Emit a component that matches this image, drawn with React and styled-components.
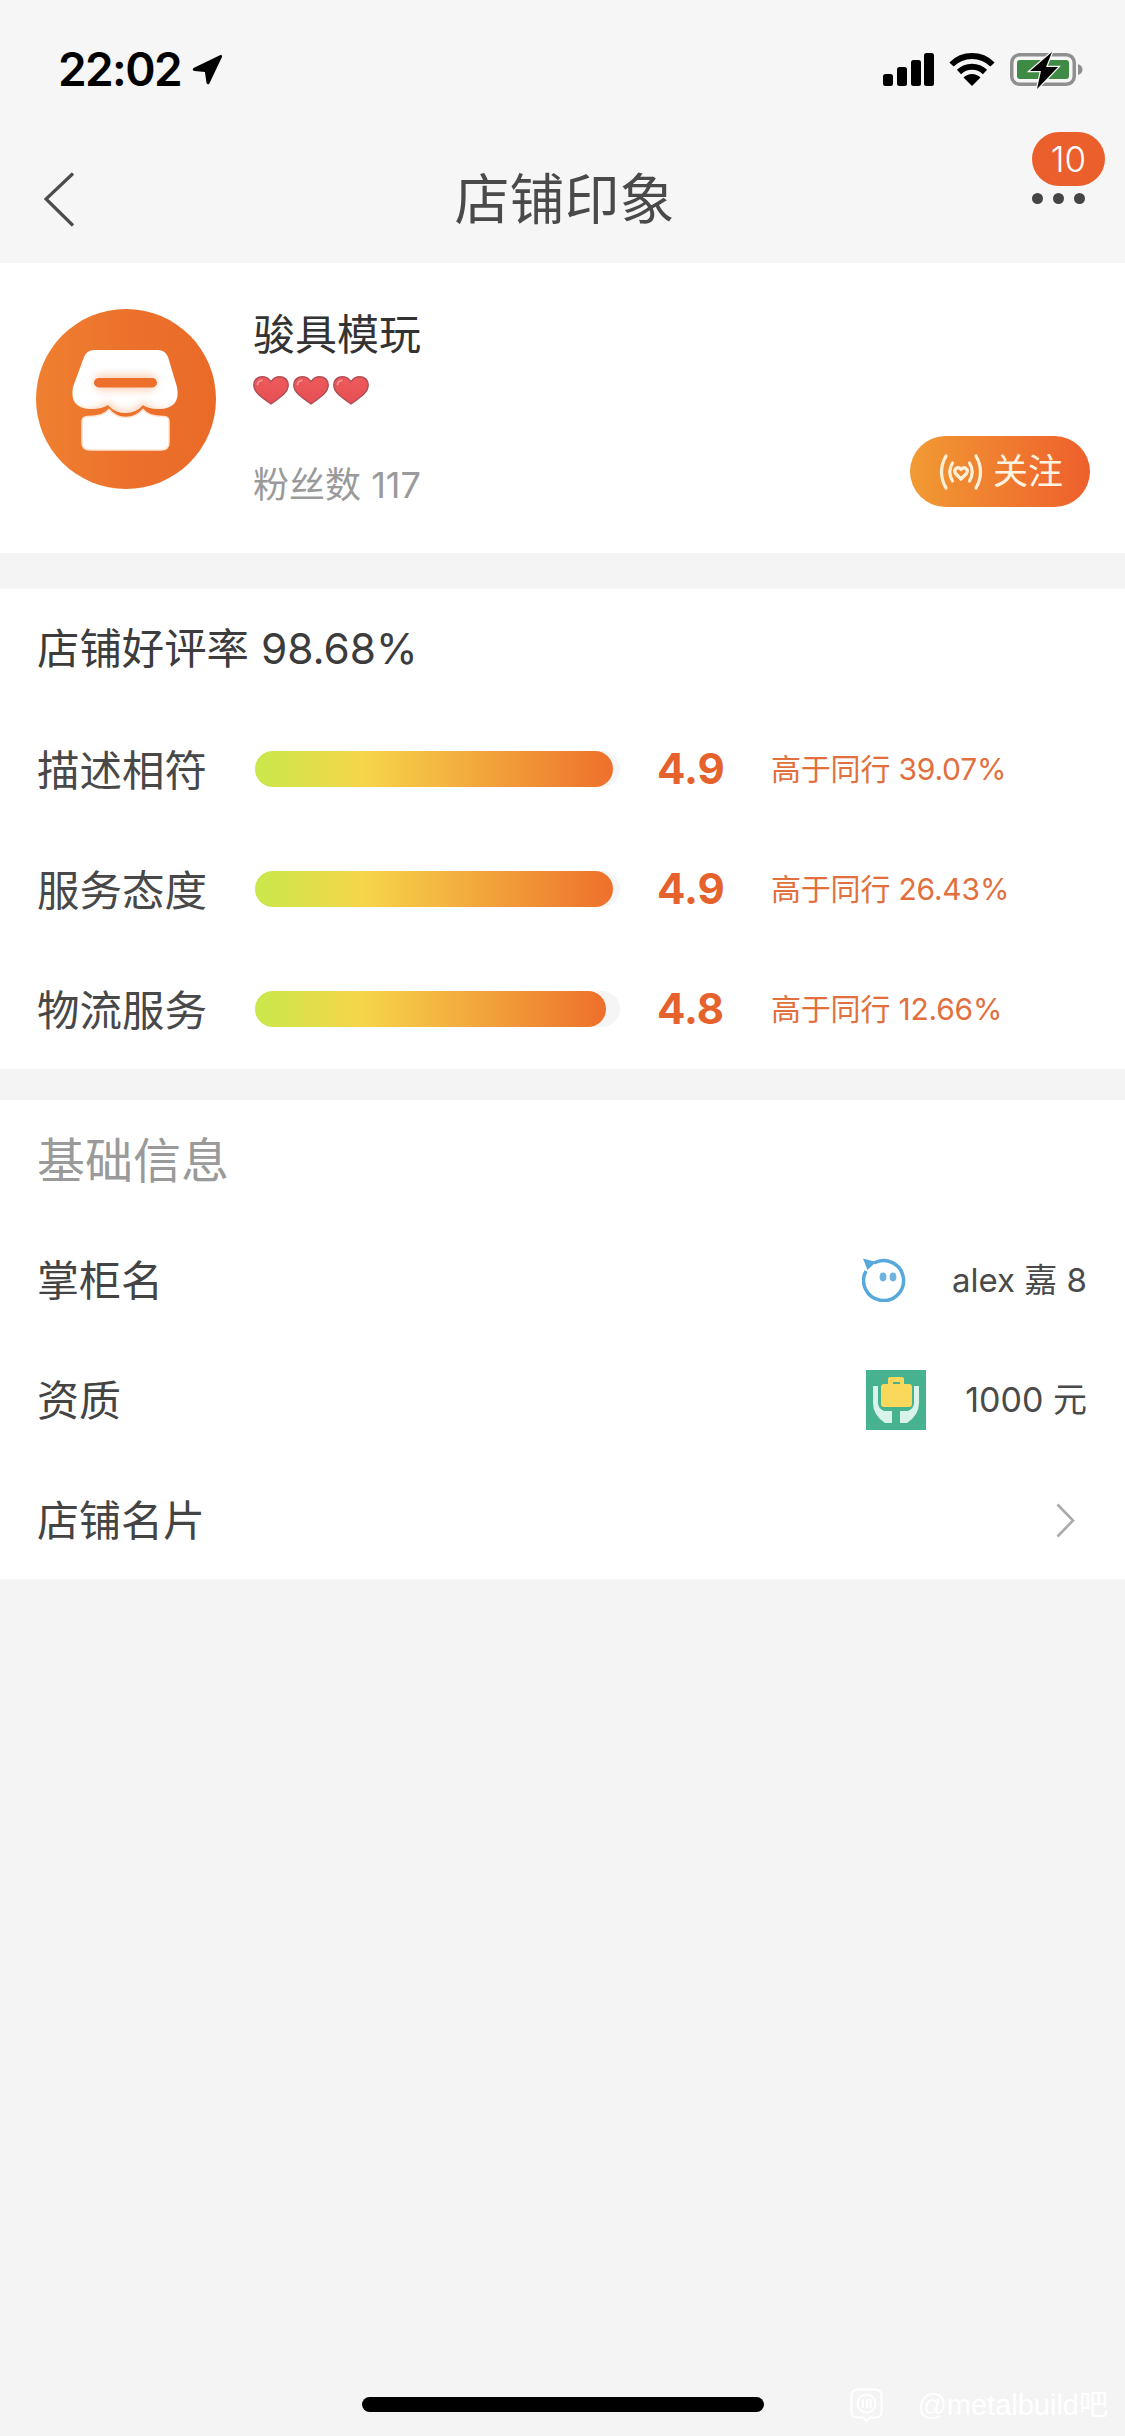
import React from "react";
import styled, { createGlobalStyle } from "styled-components";

const FONT = '"Inter", "Noto Sans CJK SC", sans-serif';

const Global = createGlobalStyle`
  html, body { margin: 0; padding: 0; background: #f4f4f4; }
  body { font-family: ${FONT}; }
  * { box-sizing: border-box; }
`;

const Page = styled.div`
  position: relative;
  width: 1125px;
  height: 2436px;
  overflow: hidden;
  display: flex;
  flex-direction: column;
  background: #f4f4f4;
`;

const Header = styled.header`
  background: #f6f6f6;
  height: 263px;
  display: flex;
  flex-direction: column;
`;

const StatusBar = styled.div`
  height: 138px;
  padding: 52px 42px 0 58px;
  display: flex;
  justify-content: space-between;
  align-items: flex-start;
`;

const Clock = styled.div`
  display: flex;
  align-items: center;
  gap: 11px;
  height: 34px;
`;

const ClockText = styled.span`
  font-weight: 600;
  font-size: 46px;
  line-height: 34px;
  letter-spacing: -1.6px;
  color: #000;
`;

const StatusIcons = styled.div`
  display: flex;
  align-items: center;
  gap: 15px;
  height: 34px;
`;

const NavBar = styled.nav`
  height: 125px;
  display: grid;
  grid-template-columns: 1fr auto 1fr;
  align-items: center;
  padding: 0 40px 0 44px;
  position: relative;
`;

const BackIcon = styled.svg`
  margin-top: -3px;
`;

const NavTitle = styled.h1`
  margin: -3px 0 0;
  font-size: 55px;
  line-height: 70px;
  font-weight: 400;
  color: #4a4a4a;
`;

const Dots = styled.div`
  justify-self: end;
  display: flex;
  gap: 10px;
  margin-top: -4px;
`;

const Dot = styled.span`
  width: 11px;
  height: 11px;
  border-radius: 50%;
  background: #454545;
`;

const Badge = styled.span`
  position: absolute;
  right: 20px;
  top: -6px;
  width: 73px;
  height: 54px;
  border-radius: 27px;
  background: #ea5f2b;
  color: #fff;
  font-size: 35px;
  font-weight: 300;
  line-height: 54px;
  text-align: center;
`;

const ShopCard = styled.section`
  background: #fff;
  height: 290px;
  padding: 46px 35px 46px 36px;
  display: flex;
`;

const AvatarSvg = styled.svg`
  width: 180px;
  height: 180px;
  flex: none;
`;

const ShopInfo = styled.div`
  margin-left: 37px;
  flex: 1;
  display: flex;
  flex-direction: column;
`;

const ShopName = styled.div`
  padding-top: 2px;
  font-size: 42px;
  line-height: 48px;
  color: #333;
`;

const Hearts = styled.div`
  display: flex;
  gap: 4px;
  margin-top: 17px;
`;

const Fans = styled.div`
  margin-top: auto;
  padding-top: 2px;
  font-size: 36px;
  line-height: 44px;
  color: #9a9a9a;
`;

const FollowButton = styled.div`
  align-self: flex-end;
  width: 180px;
  height: 71px;
  border-radius: 36px;
  background: linear-gradient(90deg, #f19a33, #ee5f2c);
  display: flex;
  align-items: center;
  padding-left: 29px;
  gap: 10px;
  color: #fff4e2;
  font-size: 35px;
  line-height: 71px;
`;

const ScoreCard = styled.section`
  background: #fff;
  margin-top: 36px;
  height: 480px;
`;

const ScoreTitle = styled.div`
  height: 120px;
  padding: 36px 0 0 37px;
  font-size: 42.4px;
  line-height: 48px;
  color: #3c3c3c;
`;

const ScoreRow = styled.div`
  height: 120px;
  display: flex;
  align-items: center;
  padding-left: 37px;
`;

const ScoreLabel = styled.div`
  width: 218px;
  flex: none;
  padding-top: 3px;
  font-size: 42.5px;
  line-height: 48px;
  color: #484848;
`;

const Track = styled.div`
  width: 365px;
  height: 36px;
  flex: none;
  border-radius: 18px;
  background: #f5f5f5;
`;

const Fill = styled.div`
  height: 100%;
  border-radius: 18px;
  background: linear-gradient(90deg, #c9e84b 0%, #f6d54a 30%, #f2a83c 62%, #ee6f2b 100%);
`;

const ScoreValue = styled.div`
  width: 114px;
  flex: none;
  margin-left: 37px;
  font-size: 42px;
  font-weight: 700;
  line-height: 48px;
  color: #e5622d;
`;

const ScoreNote = styled.div`
  font-size: 30px;
  line-height: 36px;
  letter-spacing: -0.2px;
  color: #e2703f;
  white-space: nowrap;
`;

const InfoCard = styled.section`
  background: #fff;
  margin-top: 31px;
  height: 479px;
`;

const InfoTitle = styled.div`
  height: 120px;
  padding: 30px 0 0 37px;
  font-size: 48px;
  line-height: 62px;
  color: #9a9a9a;
`;

const InfoRow = styled.div`
  height: 120px;
  display: flex;
  align-items: center;
  justify-content: space-between;
  padding: 0 38px 0 37px;
`;

const InfoLabel = styled.div`
  padding-top: 2px;
  font-size: 42px;
  line-height: 48px;
  color: #444;
`;

const InfoValue = styled.div`
  display: flex;
  align-items: center;
  gap: ${(p) => p.$gap}px;
  font-size: ${(p) => p.$size}px;
  line-height: 42px;
  color: #4a4a4a;
`;

const Footer = styled.footer`
  margin-top: auto;
  padding-bottom: 24px;
  display: flex;
  justify-content: center;
`;

const HomeBar = styled.div`
  width: 402px;
  height: 15px;
  border-radius: 8px;
  background: #000;
`;

const Watermark = styled.div`
  position: absolute;
  right: 17px;
  bottom: 14px;
  display: flex;
  align-items: center;
  gap: 34px;
  font-family: "Liberation Sans", "Noto Sans CJK SC", sans-serif;
  font-size: 29px;
  line-height: 34px;
  color: #fff;
  white-space: nowrap;
`;

const Chevron = styled.svg`
  display: block;
  margin-right: ${(p) => p.$inset || 0}px;
`;

const Heart = () => (
  <svg width="36" height="29" viewBox="0 0 36 29">
    <defs>
      <linearGradient id="heartFill" x1="0" y1="0" x2="0" y2="1">
        <stop offset="0" stopColor="#ee5a5a" />
        <stop offset="1" stopColor="#e64f55" />
      </linearGradient>
    </defs>
    <path
      d="M18 27.8 C11 22.5 0.8 17.5 0.8 8.8 C0.8 3.8 4.8 0.8 9.3 0.8 C13 0.8 16 2.8 18 5.6 C20 2.8 23 0.8 26.7 0.8 C31.2 0.8 35.2 3.8 35.2 8.8 C35.2 17.5 25 22.5 18 27.8 Z"
      fill="url(#heartFill)"
      stroke="#b25058"
      strokeWidth="1.5"
    />
    <path d="M4.5 8.5 C5 6.2 6.8 4.6 9 4.4" fill="none" stroke="#f59a98" strokeWidth="1.6" strokeLinecap="round" />
  </svg>
);

const AWNING =
  "M58 41 H122 Q129 41 132 48 L141 78 Q145 99 124 100 Q112 100 107 96 Q100 104 89.5 104 Q79 104 72 96 Q66 100 54 100 Q33 99 37 78 L48 48 Q51 41 58 41 Z";

const Avatar = () => (
  <AvatarSvg viewBox="0 0 180 180">
    <defs>
      <linearGradient id="avatarBg" x1="0" y1="0" x2="1" y2="0">
        <stop offset="0" stopColor="#ef8030" />
        <stop offset="0.5" stopColor="#ec712c" />
        <stop offset="1" stopColor="#ea6a28" />
      </linearGradient>
      <filter id="soft" x="-30%" y="-60%" width="160%" height="220%">
        <feGaussianBlur stdDeviation="3.5" />
      </filter>
      <clipPath id="awningClip">
        <path d={AWNING} />
      </clipPath>
    </defs>
    <circle cx="90" cy="90" r="90" fill="url(#avatarBg)" />
    <path d={AWNING} fill="#fff" />
    <g clipPath="url(#awningClip)">
      <rect x="58" y="65" width="63" height="17" rx="8" fill="#f5b68b" filter="url(#soft)" opacity="0.55" />
      <path d="M36 96 Q54 106 72 92 Q90 110 107 92 Q124 106 142 96 V108 H36 Z" fill="#f6bd96" filter="url(#soft)" opacity="0.6" />
    </g>
    <rect x="58" y="69" width="63" height="9.5" rx="4.7" fill="#ec6f2c" />
    <path
      d="M46 113 Q46 107.5 52 107.5 Q66 108 73 100.5 Q80 108.5 89.5 108.5 Q100 108.5 107 100.5 Q113 108 128 107.5 Q133 107.5 133 113 V133 Q133 141 125 141 H54 Q46 141 46 133 Z"
      fill="#fff"
      stroke="#fde4d2"
      strokeWidth="1.5"
    />
  </AvatarSvg>
);

const rows = [
  { label: "描述相符", pct: 98, score: "4.9", note: "高于同行 39.07%" },
  { label: "服务态度", pct: 98, score: "4.9", note: "高于同行 26.43%" },
  { label: "物流服务", pct: 96.2, score: "4.8", note: "高于同行 12.66%" },
];

export default function App() {
  return (
    <Page>
      <Global />
      <Header>
        <StatusBar>
          <Clock>
            <ClockText>22:02</ClockText>
            <svg width="31" height="31" viewBox="0 0 30 30">
              <path d="M1.5 13.5 L27 1.2 Q29.6 0.4 29 3 L16.8 28.5 Q15 30.5 14 27.8 L12.5 17.5 L2.5 16.5 Q-0.4 15.5 1.5 13.5 Z" fill="#000" />
            </svg>
          </Clock>
          <StatusIcons>
            <svg width="51" height="33" viewBox="0 0 51 33">
              <rect x="0" y="21" width="10" height="12" rx="2.5" fill="#000" />
              <rect x="14" y="14" width="10" height="19" rx="2.5" fill="#000" />
              <rect x="28" y="7" width="10" height="26" rx="2.5" fill="#000" />
              <rect x="41" y="0" width="10" height="33" rx="2.5" fill="#000" />
            </svg>
            <svg width="46" height="33" viewBox="0 0 46 33">
              <path d="M2.5 11.5 A29 29 0 0 1 43.5 11.5" fill="none" stroke="#000" strokeWidth="6" strokeLinecap="butt" />
              <path d="M10 19 A18.5 18.5 0 0 1 36 19" fill="none" stroke="#000" strokeWidth="6" />
              <path d="M23 33 L14.5 24.5 A12 12 0 0 1 31.5 24.5 Z" fill="#000" />
            </svg>
            <svg width="73" height="38" viewBox="0 0 73 38" style={{ marginTop: 3 }}>
              <rect x="1.75" y="2.75" width="62.5" height="29.5" rx="8" fill="none" stroke="#8f8f8f" strokeWidth="3.5" />
              <rect x="7" y="8" width="52" height="19" rx="3" fill="#3f8a45" />
              <path d="M68 12 Q72.5 13.5 72.5 17.5 Q72.5 21.5 68 23 Z" fill="#8f8f8f" />
              <path d="M42 0 L20 19 H31 L27 37 L48 15 H36 Z" fill="#000" stroke="#f6f6f6" strokeWidth="2.5" paintOrder="stroke" />
            </svg>
          </StatusIcons>
        </StatusBar>
        <NavBar>
          <BackIcon width="31" height="55" viewBox="0 0 31 55">
            <polyline points="29,1.5 2,27 29,53.5" fill="none" stroke="#4c4c4c" strokeWidth="3.2" />
          </BackIcon>
          <NavTitle>店铺印象</NavTitle>
          <Dots>
            <Dot />
            <Dot />
            <Dot />
          </Dots>
          <Badge>10</Badge>
        </NavBar>
      </Header>

      <ShopCard>
        <Avatar />
        <ShopInfo>
          <ShopName>骏具模玩</ShopName>
          <Hearts>
            <Heart />
            <Heart />
            <Heart />
          </Hearts>
          <Fans>粉丝数 117</Fans>
        </ShopInfo>
        <FollowButton>
          <svg width="44" height="36" viewBox="0 0 44 36" fill="none" stroke="#fff0d8" strokeWidth="3.2" strokeLinecap="round" strokeLinejoin="round">
            <path d="M7 2 Q-2 18 7 34" />
            <path d="M37 2 Q46 18 37 34" />
            <path d="M13.5 9 Q8 18 13.5 27" />
            <path d="M30.5 9 Q36 18 30.5 27" />
            <path d="M22 25 L16.5 19.5 C14 15.5 18.5 11.5 22 15.5 C25.5 11.5 30 15.5 27.5 19.5 Z" />
          </svg>
          关注
        </FollowButton>
      </ShopCard>

      <ScoreCard>
        <ScoreTitle>店铺好评率 98.68%</ScoreTitle>
        {rows.map((r) => (
          <ScoreRow key={r.label}>
            <ScoreLabel>{r.label}</ScoreLabel>
            <Track>
              <Fill style={{ width: `${r.pct}%` }} />
            </Track>
            <ScoreValue>{r.score}</ScoreValue>
            <ScoreNote>{r.note}</ScoreNote>
          </ScoreRow>
        ))}
      </ScoreCard>

      <InfoCard>
        <InfoTitle>基础信息</InfoTitle>
        <InfoRow>
          <InfoLabel>掌柜名</InfoLabel>
          <InfoValue $gap={46} $size={33}>
            <svg width="44" height="44" viewBox="0 0 44 44">
              <path d="M12 5 A20 20 0 1 1 4 13" fill="none" stroke="#56a8dd" strokeWidth="3.5" />
              <path d="M1 0.5 L14 4 L5.5 12 Z" fill="#56a8dd" />
              <ellipse cx="21" cy="19" rx="3.4" ry="4.4" fill="#6fb4e0" />
              <ellipse cx="31" cy="19" rx="3.4" ry="4.4" fill="#6fb4e0" />
            </svg>
            alex 嘉 8
          </InfoValue>
        </InfoRow>
        <InfoRow>
          <InfoLabel>资质</InfoLabel>
          <InfoValue $gap={39} $size={34}>
            <svg width="60" height="60" viewBox="0 0 60 60">
              <rect width="60" height="60" fill="#47b28f" />
              <rect x="22" y="7" width="16" height="10" rx="2" fill="#f9d85c" />
              <rect x="27" y="12" width="7" height="3" fill="#47b28f" />
              <rect x="15" y="14" width="31" height="23" rx="3" fill="#f9d85c" />
              <path d="M7 16 H12 V33 Q12 38 18 41 H26 V53 H19 Q7 45 7 33 Z" fill="#d9f3ea" />
              <path d="M53 16 H48 V33 Q48 38 42 41 H34 V53 H41 Q53 45 53 33 Z" fill="#d9f3ea" />
            </svg>
            1000 元
          </InfoValue>
        </InfoRow>
        <InfoRow>
          <InfoLabel>店铺名片</InfoLabel>
          <Chevron $inset={12} width="19" height="35" viewBox="0 0 19 35">
            <polyline points="1.5,1.5 17,17.5 1.5,33.5" fill="none" stroke="#ababab" strokeWidth="2.6" />
          </Chevron>
        </InfoRow>
      </InfoCard>

      <Footer>
        <HomeBar />
      </Footer>
      <Watermark>
        <svg width="33" height="34" viewBox="0 0 33 34" fill="none" stroke="#fff" strokeWidth="2">
          <path d="M8 1.5 H25 Q31.5 1.5 31.5 8 V24 Q31.5 29.5 25 29.5 H20 L16.5 33 L13 29.5 H8 Q1.5 29.5 1.5 24 V8 Q1.5 1.5 8 1.5 Z" />
          <circle cx="16.5" cy="15.5" r="9" />
          <path d="M13 11 V20 M17 11 V20 M20.5 11 V20" />
        </svg>
        <span>@metalbuild吧</span>
      </Watermark>
    </Page>
  );
}
